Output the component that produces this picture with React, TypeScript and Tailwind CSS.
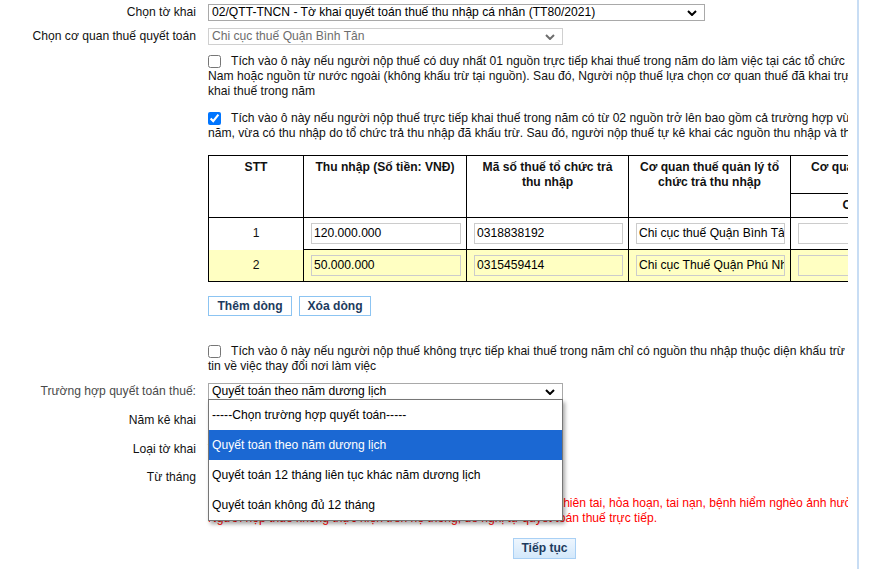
import React from 'react';

const Chevron: React.FC<{ color?: string }> = ({ color = '#000' }) => (
  <svg width="10" height="6" viewBox="0 0 10 6" className="shrink-0">
    <polyline points="1,1 5,5 9,1" fill="none" stroke={color} strokeWidth="2" />
  </svg>
);

const FakeSelect: React.FC<{ value: string; width: string; disabled?: boolean }> = ({ value, width, disabled }) => (
  <div
    className={`flex h-[17px] items-center justify-between border bg-white pl-[3px] pr-[7px] ${width} ${
      disabled ? 'border-[#d0d0d0] text-[#6d6d6d]' : 'border-[#a9a9a9] text-black'
    }`}
  >
    <span className="whitespace-nowrap">{value}</span>
    <Chevron color={disabled ? '#6d6d6d' : '#000'} />
  </div>
);

const Row: React.FC<{ label: string; labelClass?: string; className?: string; children?: React.ReactNode }> = ({
  label,
  labelClass = '',
  className = '',
  children,
}) => (
  <div className={`flex items-center ${className}`}>
    <div className={`w-[196px] shrink-0 whitespace-nowrap text-right ${labelClass}`}>{label}</div>
    <div className="ml-3">{children}</div>
  </div>
);

const CheckBlock: React.FC<{ checked?: boolean; lines: string[]; className?: string }> = ({ checked, lines, className = '' }) => (
  <div className={`pl-[208px] ${className}`}>
    <div className="flex items-center whitespace-nowrap">
      <input type="checkbox" defaultChecked={checked} className="m-0 mr-[10px] h-[13px] w-[13px]" />
      <span>{lines[0]}</span>
    </div>
    {lines.slice(1).map((l) => (
      <div key={l} className="whitespace-nowrap">
        {l}
      </div>
    ))}
  </div>
);

const incomes = [
  { stt: '1', amount: '120.000.000', mst: '0318838192', cqt: 'Chi cục thuế Quận Bình Tân', yellow: false },
  { stt: '2', amount: '50.000.000', mst: '0315459414', cqt: 'Chi cục Thuế Quận Phú Nhuận', yellow: true },
];

const options = [
  '-----Chọn trường hợp quyết toán-----',
  'Quyết toán theo năm dương lịch',
  'Quyết toán 12 tháng liên tục khác năm dương lịch',
  'Quyết toán không đủ 12 tháng',
];

const headers = [
  { text: 'STT', pad: 'px-3' },
  { text: 'Thu nhập (Số tiền: VNĐ)', pad: 'px-1' },
  { text: 'Mã số thuế tổ chức trả thu nhập', pad: 'px-3' },
  { text: 'Cơ quan thuế quản lý tổ chức trả thu nhập', pad: 'px-1' },
];

const App: React.FC = () => {
  return (
    <div className="h-[569px] w-[875px] overflow-hidden bg-white font-['Liberation_Sans',Arial,sans-serif] text-[12.12px] leading-[15px] text-[#111]">
      <div className="flex h-full">
        <div className="w-[848px] shrink-0 overflow-hidden">
          <div className="w-[1100px] pt-[4px]">
            <Row label="Chọn tờ khai">
              <FakeSelect width="w-[497px]" value="02/QTT-TNCN - Tờ khai quyết toán thuế thu nhập cá nhân (TT80/2021)" />
            </Row>
            <Row label="Chọn cơ quan thuế quyết toán" className="mt-[7px]">
              <FakeSelect width="w-[355px]" value="Chi cục thuế Quận Bình Tân" disabled />
            </Row>

            <CheckBlock
              className="mt-[9px]"
              lines={[
                'Tích vào ô này nếu người nộp thuế có duy nhất 01 nguồn trực tiếp khai thuế trong năm do làm việc tại các tổ chức quốc tế, Đại sứ quán, Lãnh sự quán tại Việt',
                'Nam hoặc nguồn từ nước ngoài (không khấu trừ tại nguồn). Sau đó, Người nộp thuế lựa chọn cơ quan thuế đã khai trực tiếp',
                'khai thuế trong năm',
              ]}
            />
            <CheckBlock
              checked
              className="mt-[12px]"
              lines={[
                'Tích vào ô này nếu người nộp thuế trực tiếp khai thuế trong năm có từ 02 nguồn trở lên bao gồm cả trường hợp vừa có thu nhập trực tiếp khai thuế trong',
                'năm, vừa có thu nhập do tổ chức trả thu nhập đã khấu trừ. Sau đó, người nộp thuế tự kê khai các nguồn thu nhập và thông tin',
              ]}
            />

            <div className="mt-[14px] pl-[208px]">
              <table className="w-[822px] table-fixed border-collapse">
                <colgroup>
                  <col className="w-[95px]" />
                  <col className="w-[163px]" />
                  <col className="w-[162px]" />
                  <col className="w-[162px]" />
                  <col className="w-[120px]" />
                  <col className="w-[120px]" />
                </colgroup>
                <thead>
                  <tr className="h-[38px]">
                    {headers.map((h) => (
                      <th key={h.text} rowSpan={2} className={`border border-black ${h.pad} pt-[4px] align-top font-bold`}>
                        {h.text}
                      </th>
                    ))}
                    <th colSpan={2} className="border border-black px-2 pt-[4px] align-top font-bold">
                      Cơ quan thuế nơi đã khai trực tiếp
                    </th>
                  </tr>
                  <tr className="h-[24px]">
                    <th className="border border-black font-bold">Có</th>
                    <th className="border border-black font-bold">Không</th>
                  </tr>
                </thead>
                <tbody>
                  {incomes.map((r, i) => (
                    <tr key={r.stt} className={`h-[32px] ${r.yellow ? 'bg-[#ffffc2]' : ''}`}>
                      <td className={`border-x border-black text-center ${i === incomes.length - 1 ? 'border-b' : ''}`}>{r.stt}</td>
                      {[r.amount, r.mst, r.cqt, '', ''].map((v, j) => (
                        <td key={j} className="border border-black pl-[7px] pr-[5px]">
                          <div className="h-[21px] w-full overflow-hidden whitespace-nowrap border border-[#cccccc] pl-[2px] leading-[19px] text-black">
                            {v}
                          </div>
                        </td>
                      ))}
                    </tr>
                  ))}
                </tbody>
              </table>
            </div>

            <div className="mt-[14px] flex gap-[7px] pl-[208px]">
              <button className="h-[20px] w-[84px] border border-[#8cc4f2] bg-white font-bold text-[#1d3b5e]">Thêm dòng</button>
              <button className="h-[20px] w-[72px] border border-[#8cc4f2] bg-white font-bold text-[#1d3b5e]">Xóa dòng</button>
            </div>

            <CheckBlock
              className="mt-[28px]"
              lines={[
                'Tích vào ô này nếu người nộp thuế không trực tiếp khai thuế trong năm chỉ có nguồn thu nhập thuộc diện khấu trừ',
                'tin về việc thay đổi nơi làm việc',
              ]}
            />

            <Row label="Trường hợp quyết toán thuế:" labelClass="text-[#4a4a4a]" className="relative z-10 mt-[9px]">
              <div className="relative">
                <FakeSelect width="w-[355px]" value="Quyết toán theo năm dương lịch" />
                <div className="absolute left-0 top-[16px] w-[355px] border border-[#767676] bg-white shadow-[2px_3px_4px_rgba(0,0,0,0.35)]">
                  {options.map((o, i) => (
                    <div
                      key={o}
                      className={`flex h-[30px] items-center whitespace-nowrap pl-[3px] ${
                        i === 1 ? 'bg-[#1b68d3] text-white' : 'text-black'
                      }`}
                    >
                      {o}
                    </div>
                  ))}
                </div>
              </div>
            </Row>

            <div className="mt-[6px]">
              <Row label="Năm kê khai" className="h-[29px]">
                <FakeSelect width="w-[80px]" value="2022" />
              </Row>
              <Row label="Loại tờ khai" className="h-[28px]">
                <span>Tờ khai chính thức</span>
              </Row>
              <Row label="Từ tháng" className="h-[29px]">
                <FakeSelect width="w-[80px]" value="01/2022" />
              </Row>
            </div>

            <div className="mt-[4px] pl-[208px] text-[#f00]">
              <div className="whitespace-nowrap">
                Lưu ý: Trường hợp người nộp thuế đề nghị xét giảm thuế do gặp thiên tai, hỏa hoạn, tai nạn, bệnh hiểm nghèo ảnh hưởng đến khả năng nộp thuế
              </div>
              <div className="whitespace-nowrap">Người nộp thuế không thực hiện trên hệ thống, đề nghị tự quyết toán thuế trực tiếp.</div>
            </div>

            <div className="mt-[12px] pl-[513px]">
              <button className="h-[21px] w-[63px] border border-[#a9d0f5] bg-gradient-to-b from-[#eef6fe] to-[#d3e8fb] font-bold text-[#1d3b5e]">
                Tiếp tục
              </button>
            </div>
          </div>
        </div>
        <div className="w-[9px] shrink-0" />
        <div className="w-[2px] shrink-0 bg-[#c8ddf4]" />
      </div>
    </div>
  );
};

export default App;
